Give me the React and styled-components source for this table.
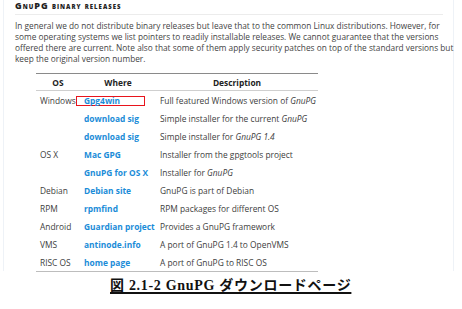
import React from "react";
import styled, { createGlobalStyle } from "styled-components";

const GlobalStyle = createGlobalStyle`
  html, body {
    margin: 0;
    padding: 0;
    background: #ffffff;
  }
  body {
    font-family: "Open Sans", "Noto Sans", sans-serif;
    color: #3a3a3a;
  }
`;

const releases = [
  { os: "Windows", where: "Gpg4win", desc: ["Full featured Windows version of ", <em key="e">GnuPG</em>], marked: true },
  { os: "", where: "download sig", desc: ["Simple installer for the current ", <em key="e">GnuPG</em>] },
  { os: "", where: "download sig", desc: ["Simple installer for ", <em key="e">GnuPG 1.4</em>] },
  { os: "OS X", where: "Mac GPG", desc: ["Installer from the gpgtools project"] },
  { os: "", where: "GnuPG for OS X", desc: ["Installer for ", <em key="e">GnuPG</em>] },
  { os: "Debian", where: "Debian site", desc: ["GnuPG is part of Debian"] },
  { os: "RPM", where: "rpmfind", desc: ["RPM packages for different OS"] },
  { os: "Android", where: "Guardian project", desc: ["Provides a GnuPG framework"] },
  { os: "VMS", where: "antinode.info", desc: ["A port of GnuPG 1.4 to OpenVMS"] },
  { os: "RISC OS", where: "home page", desc: ["A port of GnuPG to RISC OS"] },
];

export default function App() {
  return (
    <Page>
      <GlobalStyle />
      <Panel>
        <Heading>GnuPG binary releases</Heading>
        <Intro>
          In general we do not distribute binary releases but leave that to the common Linux distributions. However, for
          <br />
          some operating systems we list pointers to readily installable releases. We cannot guarantee that the versions
          <br />
          offered there are current. Note also that some of them apply security patches on top of the standard versions but
          <br />
          keep the original version number.
        </Intro>
        <Table>
          <thead>
            <tr>
              <Th $w={44}>OS</Th>
              <Th $w={76}>Where</Th>
              <Th>Description</Th>
            </tr>
          </thead>
          <tbody>
            {releases.map((r, i) => (
              <tr key={i}>
                <Td>{r.os}</Td>
                <Td>
                  <Link $marked={r.marked}>{r.where}</Link>
                </Td>
                <Td>{r.desc}</Td>
              </tr>
            ))}
          </tbody>
        </Table>
      </Panel>
      <Caption>図 2.1-2 GnuPG ダウンロードページ</Caption>
    </Page>
  );
}

const Page = styled.div`
  width: 462px;
  height: 309px;
  overflow: hidden;
`;

const Panel = styled.div`
  margin: 0 8px 0 3px;
  padding: 0 0 0 11px;
  height: 271px;
  box-sizing: border-box;
  border-left: 1px solid #eef2f7;
  border-right: 1px solid #eef2f7;
`;

const Heading = styled.h3`
  margin: 0;
  padding: 0 0 3px;
  font-size: 9px;
  line-height: 11px;
  font-weight: 800;
  font-variant: small-caps;
  letter-spacing: 1px;
  color: #222;
  border-bottom: 1px solid #ececec;
  margin-right: 10px;
`;

const Intro = styled.p`
  margin: 5px 0 0;
  font-size: 8.3px;
  line-height: 11px;
  color: #444;
  white-space: nowrap;
`;

const Table = styled.table`
  margin: 9px 0 0 21px;
  width: 282px;
  border-collapse: collapse;
  border-top: 1px solid #8a8a8a;
  border-bottom: 1px solid #bdbdbd;
  font-size: 8.4px;
  line-height: 11px;
  table-layout: fixed;

  em {
    font-style: italic;
  }
`;

const Th = styled.th`
  height: 16px;
  padding: 0;
  font-weight: 700;
  color: #222;
  text-align: center;
  border-bottom: 1px solid #cfcfcf;
  width: ${(p) => (p.$w ? `${p.$w}px` : "auto")};
`;

const Td = styled.td`
  height: 18px;
  padding: 0 0 0 4px;
  color: #404040;
  white-space: nowrap;
  vertical-align: middle;
`;

const Link = styled.span`
  color: #1b8cd8;
  font-weight: 700;
  ${(p) =>
    p.$marked &&
    `
    display: inline-block;
    margin-left: -8px;
    padding: 0 24px 0 7px;
    line-height: 8px;
    border: 1.5px solid #e8141c;
  `}
`;

const Caption = styled.div`
  margin: 7px 0 0 110px;
  width: 240px;
  font-family: "Liberation Serif", "Noto Sans CJK JP", serif;
  font-weight: 700;
  font-size: 14px;
  line-height: 16px;
  letter-spacing: 0.7px;
  color: #111;
  text-decoration: underline;
  text-decoration-thickness: 1.5px;
  text-underline-offset: 2px;
  white-space: nowrap;
`;
